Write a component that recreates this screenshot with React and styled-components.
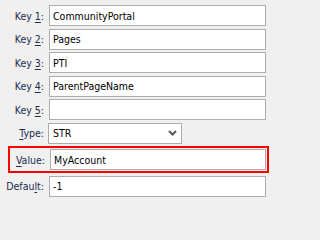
import React from 'react';
import styled, { createGlobalStyle } from 'styled-components';

const GlobalStyle = createGlobalStyle`
  html, body {
    margin: 0;
    padding: 0;
    background: #f0f0f0;
  }
  body {
    font-family: "DejaVu Sans Condensed", "Liberation Sans", sans-serif;
    font-size: 10.5px;
  }
`;

const Form = styled.div`
  display: flex;
  flex-direction: column;
  gap: 2.5px;
  padding: 5px 5px 0 0;
  width: 271px;
  box-sizing: border-box;
`;

const Row = styled.div`
  display: flex;
  align-items: center;
  height: 21px;
`;

const Highlight = styled.div`
  display: flex;
  align-items: center;
  border: 2px solid #ff0000;
  padding: 1px;
  margin: 0 -3px 0 8px;
  height: 21px;
`;

const Label = styled.label`
  width: ${props => props.width || 45}px;
  flex: none;
  box-sizing: border-box;
  padding-right: 1px;
  text-align: right;
  color: #1b2c4c;
  white-space: nowrap;
  u {
    text-decoration: underline;
    text-underline-offset: 2px;
  }
`;

const Input = styled.div`
  flex: 1;
  height: 21px;
  box-sizing: border-box;
  margin-left: 4px;
  border: 1px solid #abadb3;
  background: #ffffff;
  color: #000000;
  padding: 0 3px;
  display: flex;
  align-items: center;
  white-space: nowrap;
  overflow: hidden;
`;

const Select = styled.div`
  width: 134px;
  height: 21px;
  box-sizing: border-box;
  margin-left: 3px;
  border: 1px solid #acacac;
  background: #ffffff;
  color: #000000;
  padding: 0 4px 0 4px;
  display: flex;
  align-items: center;
  justify-content: space-between;
`;

const Chevron = () => (
  <svg width="9" height="6" viewBox="0 0 9 6">
    <path d="M1 1 L4.5 4.5 L8 1" fill="none" stroke="#5a5a5a" strokeWidth="2" />
  </svg>
);

const keys = [
  { n: '1', value: 'CommunityPortal' },
  { n: '2', value: 'Pages' },
  { n: '3', value: 'PTI' },
  { n: '4', value: 'ParentPageName' },
  { n: '5', value: '' },
];

export default function App() {
  return (
    <>
      <GlobalStyle />
      <Form>
        {keys.map(k => (
          <Row key={k.n}>
            <Label>Key <u>{k.n}</u>:</Label>
            <Input>{k.value}</Input>
          </Row>
        ))}
        <Row>
          <Label><u>T</u>ype:</Label>
          <Select>
            <span>STR</span>
            <Chevron />
          </Select>
        </Row>
        <Highlight>
          <Label width={35}><u>V</u>alue:</Label>
          <Input>MyAccount</Input>
        </Highlight>
        <Row>
          <Label>Defau<u>l</u>t:</Label>
          <Input>-1</Input>
        </Row>
      </Form>
    </>
  );
}
